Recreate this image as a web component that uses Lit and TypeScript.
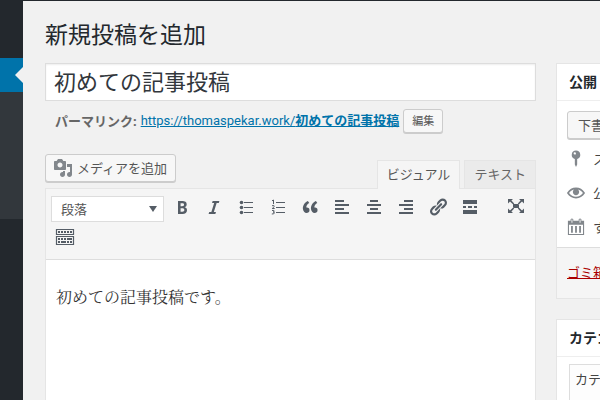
import { LitElement, html, css, svg } from "lit";
import { customElement } from "lit/decorators.js";

const shapes = {
  bold: svg`<path d="M6 4v13h4.54c1.37 0 2.46-.33 3.26-1 .8-.66 1.2-1.58 1.2-2.77 0-.84-.17-1.51-.51-2.01s-.9-.85-1.67-1.03v-.09c.57-.1 1.02-.4 1.36-.9s.51-1.13.51-1.91c0-1.14-.39-1.98-1.17-2.5C12.75 4.26 11.5 4 9.78 4H6zm2.57 5.15V6.26h1.36c.73 0 1.27.11 1.61.32.34.22.51.58.51 1.07 0 .54-.16.92-.47 1.15s-.82.35-1.51.35h-1.5zm0 2.19h1.6c1.44 0 2.16.53 2.16 1.61 0 .6-.17 1.05-.51 1.34s-.86.43-1.57.43H8.57v-3.38z"/>`,
  italic: svg`<path d="M14.78 6h-2.13l-2.8 9h2.12l-.62 2H4.6l.62-2h2.14l2.8-9H8.03l.62-2h6.75z"/>`,
  bullets: svg`<circle cx="5.5" cy="5.5" r="1.8"/><circle cx="5.5" cy="10.5" r="1.8"/><circle cx="5.5" cy="15.5" r="1.8"/><path d="M8 5h9v1H8zM8 10h9v1H8zM8 15h9v1H8z"/>`,
  numbers: svg`<path d="M8 5h9v1H8zM8 10h9v1H8zM8 15h9v1H8z"/><path d="M4 3.800 5.500 3v4M4 8.800q2.400-1 2.200.4Q6 10.400 4.200 11.500H6.700M4 13.500q2.500-.5 2.300.6-.2.900-1.300.9 1.500 0 1.500 1t-2.700 1" fill="none" stroke="currentColor"/>`,
  quote: svg`<path d="M9.490 13.220c0-.74-.2-1.380-.61-1.900-.62-.78-1.830-.88-2.530-.72-.29-1.650 1.110-3.750 2.920-4.650L7.880 4c-2.730 1.300-5.420 4.280-4.960 8.050C3.210 14.430 4.590 16 6.540 16c.85 0 1.560-.25 2.120-.75s.83-1.180.83-2.030zm8.050 0c0-.74-.2-1.380-.61-1.900-.63-.78-1.830-.88-2.530-.72-.29-1.650 1.110-3.750 2.920-4.650L15.930 4c-2.730 1.300-5.410 4.280-4.950 8.050.29 2.380 1.660 3.950 3.610 3.950.85 0 1.560-.25 2.120-.75s.83-1.180.83-2.030z"/>`,
  left: svg`<path d="M3 3h9v2H3zM3 7h14v2H3zM3 11h9v2H3zM3 15h14v2H3z"/>`,
  center: svg`<path d="M6 3h8v2H6zM3 7h14v2H3zM6 11h8v2H6zM3 15h14v2H3z"/>`,
  right: svg`<path d="M8 3h9v2H8zM3 7h14v2H3zM8 11h9v2H8zM3 15h14v2H3z"/>`,
  link: svg`<path d="M17.740 2.760c1.680 1.690 1.680 4.410 0 6.100l-1.530 1.520c-1.120 1.120-2.700 1.470-4.140 1.090l2.620-2.610.76-.77.76-.76c.84-.84.84-2.200 0-3.040-.84-.85-2.200-.85-3.040 0l-.77.76-3.380 3.380c-.37-1.440-.02-3.020 1.100-4.140l1.520-1.530c1.690-1.680 4.420-1.680 6.100 0zM8.590 13.430l5.340-5.340c.42-.42.42-1.100 0-1.520-.44-.43-1.130-.39-1.530 0l-5.330 5.340c-.42.42-.42 1.100 0 1.520.44.43 1.130.39 1.520 0zm-.76 2.290l4.140-4.150c.38 1.440.03 3.020-1.090 4.140l-1.520 1.530c-1.690 1.680-4.410 1.680-6.100 0-1.680-1.680-1.680-4.420 0-6.100l1.530-1.520c1.120-1.120 2.700-1.470 4.140-1.100l-4.140 4.150c-.85.84-.85 2.200 0 3.050.84.84 2.200.84 3.040 0z"/>`,
  more: svg`<path d="M17 7V3H3v4h14zM6 11V9H3v2h3zm6 0V9H8v2h4zm5 0V9h-3v2h3zm0 6v-4H3v4h14z"/>`,
  expand: svg`<path d="M7 8h6v4H7zM2 3h5L5.400 4.600 8.200 7.400 7.200 8.400 4 5.600 2 7.500zM18 3h-5l1.600 1.600-2.800 2.800 1 1L16 5.600l2 1.900zM2 17h5l-1.600-1.600 2.800-2.800-1-1L4 14.400l-2-1.900zM18 17h-5l1.600-1.600-2.800-2.800 1-1 3.200 2.800 2-1.900z"/>`,
  keyboard: svg`<path d="M1.500 2.500h17v5h-17zM1.500 9.500h17v8h-17z" fill="none" stroke="currentColor" stroke-width="1.200"/><path d="M3 4h2v2H3zM6 4h2v2H6zM9 4h2v2H9zM12 4h2v2h-2zM15 4h2v2h-2zM3 11h2v2H3zM6 11h2v2H6zM9 11h2v2H9zM12 11h5v2h-5zM3 14h2v2H3zM6 14h5v2H6zM12 14h2v2h-2zM15 14h2v2h-2z"/>`,
  media: svg`<path d="M13 11V4c0-.55-.45-1-1-1h-1.670L9 1H5L3.670 3H2c-.55 0-1 .45-1 1v7c0 .55.45 1 1 1h10c.55 0 1-.45 1-1zM7 4.500c1.380 0 2.500 1.120 2.500 2.500S8.380 9.500 7 9.500 4.500 8.380 4.500 7 5.620 4.500 7 4.500zM14 6h5v10.500c0 1.380-1.120 2.500-2.500 2.500S14 17.880 14 16.500s1.120-2.500 2.500-2.500c.17 0 .34.02.5.05V9h-3V6zm-4 8.050V13h2v3.500c0 1.380-1.120 2.500-2.500 2.500S7 17.880 7 16.500 8.120 14 9.500 14c.17 0 .34.02.5.05z"/>`,
  pin: svg`<path fill-rule="evenodd" d="M10 .500a4.800 4.800 0 0 1 1.300 9.400V16L10 19 8.700 16V9.900A4.800 4.800 0 0 1 10 .500zM8.600 2.500a1.300 1.300 0 1 0 .1 2.600 1.300 1.300 0 0 0-.1-2.600z"/>`,
  eye: svg`<path d="M19.700 9.400C17.700 6 14 3.900 10 3.900S2.300 6 .3 9.400L0 10l.3.6c2 3.400 5.700 5.500 9.700 5.500s7.700-2.100 9.700-5.500l.3-.6-.3-.6zM10 14.100c-3.100 0-6-1.600-7.700-4.100C3.600 8 5.700 6.600 8 6.100c-.9.6-1.500 1.700-1.500 2.900 0 1.900 1.600 3.500 3.500 3.500s3.500-1.600 3.500-3.500c0-1.200-.6-2.300-1.500-2.900 2.300.5 4.400 1.900 5.700 3.900-1.700 2.500-4.600 4.100-7.700 4.100z"/>`,
  calendar: svg`<path fill-rule="evenodd" d="M1 3h3V1.500q1.500-2 3 0V3h6V1.500q1.500-2 3 0V3h3v16H1zM2.200 7.500v10.300h15.600V7.500zM5 1.700v3.500h1V1.700zM14 1.700v3.500h1V1.700z"/><path d="M4.500 9h2v7.500h-2zM9 9h2v7.500H9zM13.500 9h2v7.500h-2z"/>`,
};
type Shape = keyof typeof shapes;

const icon = (name: Shape) =>
  html`<svg class="icon" viewBox="0 0 20 20" aria-hidden="true">${shapes[name]}</svg>`;

const tools: [Shape, string][] = [
  ["bold", "太字"], ["italic", "イタリック"], ["bullets", "番号なしリスト"],
  ["numbers", "番号付きリスト"], ["quote", "引用"], ["left", "左寄せ"],
  ["center", "中央揃え"], ["right", "右寄せ"], ["link", "リンクの挿入/編集"],
  ["more", "「続きを読む」タグを挿入"],
];

@customElement("app-root")
export class AppRoot extends LitElement {
  static styles = css`
    :host {
      display: block;
      font: 13px/20px "Noto Sans", "Noto Sans CJK JP", sans-serif;
      color: #444;
    }
    * { box-sizing: border-box; }
    button, input, select { font: inherit; color: inherit; margin: 0; }
    a { color: #0073aa; }
    .icon { display: block; width: 20px; height: 20px; fill: currentColor; flex: none; }
    .page {
      display: grid;
      grid-template-columns: 23px minmax(0, 1fr) 44px;
      height: 100vh;
      overflow: hidden;
      background: #f1f1f1;
      border-top: 1px solid #23282d;
    }
    .menu { background: #23282d; padding-top: 57px; }
    .current {
      height: 34px;
      background: #0073aa;
      display: flex;
      align-items: center;
      justify-content: flex-end;
    }
    .current::after {
      content: "";
      border: 8px solid transparent;
      border-right-color: #f1f1f1;
      border-left: 0;
    }
    .submenu { height: 127px; background: #32373c; }
    .main { padding: 17px 20px 0 22px; display: flex; flex-direction: column; }
    h1 {
      margin: 0 0 13px;
      font-size: 23px;
      font-weight: 400;
      line-height: 32px;
      color: #23282d;
    }
    .title {
      width: 100%;
      height: 38px;
      padding: 0 8px 4px;
      border: 1px solid #ddd;
      background: #fff;
      font-size: 22px;
      color: #32373c;
      box-shadow: inset 0 1px 2px rgba(0, 0, 0, 0.07);
    }
    .permalink {
      display: flex;
      align-items: center;
      gap: 4px;
      padding: 8px 10px 0;
      white-space: nowrap;
      color: #666;
    }
    .permalink a { font-family: Roboto, "Noto Sans CJK JP", sans-serif; }
    .button {
      display: flex;
      align-items: center;
      border: 1px solid #ccc;
      border-radius: 3px;
      background: #f7f7f7;
      box-shadow: 0 1px 0 #ccc;
      color: #555;
      height: 28px;
      padding: 0 10px;
      white-space: nowrap;
    }
    .small { height: 24px; padding: 0 8px; font-size: 11px; }
    .bar { display: flex; justify-content: space-between; align-items: flex-end; padding-top: 21px; }
    .media { gap: 4px; padding: 0 8px 0 7px; margin-bottom: 6px; }
    .media .icon { color: #82878c; }
    .tabs { display: flex; gap: 4px; }
    .tab {
      height: 28px;
      padding: 0 9px 2px;
      border: 1px solid #e5e5e5;
      border-bottom: 0;
      background: #ebebeb;
      color: #666;
    }
    .active {
      background: #f5f5f5;
      color: #555;
      height: 29px;
      margin-bottom: -1px;
      position: relative;
    }
    .editor {
      flex: 1;
      border: 1px solid #e5e5e5;
      border-bottom: 0;
      background: #fff;
    }
    .toolbar {
      padding: 7px 5px 12px;
      height: 71px;
      background: #f5f5f5;
      border-bottom: 1px solid #ddd;
      color: #555d66;
    }
    .row { display: flex; align-items: flex-start; }
    .format {
      appearance: none;
      width: 113px;
      height: 26px;
      margin-right: 2px;
      padding: 0 9px;
      border: 1px solid #ddd;
      border-radius: 0;
      background: #fff;
    }
    .picker { display: grid; align-items: center; color: #555; }
    .picker > * { grid-area: 1 / 1; }
    .picker::after {
      content: "";
      grid-area: 1 / 1;
      justify-self: end;
      margin-right: 9px;
      border: 4px solid transparent;
      border-top: 6px solid #555d66;
      border-bottom: 0;
      pointer-events: none;
    }
    .tool {
      width: 32px;
      height: 22px;
      padding: 0 6px;
      border: 0;
      background: none;
    }
    .wide { margin-left: auto; width: 28px; padding: 0 4px; height: 20px; }
    .second { width: 28px; padding: 0 4px; margin-top: 4px; }
    .content {
      margin: 0;
      padding: 23px 10px;
      font: 16px/28px "Noto Serif CJK JP", "Noto Sans CJK JP", serif;
      color: #333;
    }
    .side {
      padding-top: 62px;
      display: flex;
      flex-direction: column;
      gap: 20px;
      min-width: 0;
      overflow: hidden;
    }
    .panel { width: 280px; flex: none; border: 1px solid #e5e5e5; background: #fff; }
    h2 {
      margin: 0;
      padding: 8px 12px;
      border-bottom: 1px solid #eee;
      font-size: 14px;
      line-height: 20px;
      color: #23282d;
    }
    .publish { padding: 10px 10px 3px; }
    .publish .icon { color: #82878c; width: 18px; height: 18px; }
    .status { display: flex; align-items: center; gap: 8px; height: 34px; }
    .status:nth-of-type(1) { margin-top: 3px; }
    .footer { padding: 14px 10px 16px; border-top: 1px solid #ddd; background: #f5f5f5; }
    .trash { color: #a00; }
    .categories { padding: 7px 12px; }
    .list { border: 1px solid #ddd; background: #fdfdfd; padding: 4px 5px; height: 200px; }
  `;

  render() {
    return html`
      <div class="page">
        <nav class="menu" aria-label="メニュー">
          <div class="current"></div>
          <div class="submenu"></div>
        </nav>
        <main class="main">
          <h1>新規投稿を追加</h1>
          <input class="title" aria-label="タイトル" value="初めての記事投稿" />
          <div class="permalink">
            <strong>パーマリンク:</strong>
            <a href="https://thomaspekar.work/">https://thomaspekar.work/<strong>初めての記事投稿</strong></a>
            <button class="button small">編集</button>
          </div>
          <div class="bar">
            <button class="button media">${icon("media")}メディアを追加</button>
            <div class="tabs">
              <button class="tab active">ビジュアル</button>
              <button class="tab">テキスト</button>
            </div>
          </div>
          <section class="editor">
            <div class="toolbar">
              <div class="row">
                <div class="picker">
                  <select class="format" aria-label="書式"><option>段落</option></select>
                </div>
                ${tools.map(([name, label]) => html`<button class="tool" aria-label=${label}>${icon(name)}</button>`)}
                <button class="tool wide" aria-label="集中執筆モード">${icon("expand")}</button>
              </div>
              <div class="row">
                <button class="tool second" aria-label="ツールバー切り替え">${icon("keyboard")}</button>
              </div>
            </div>
            <p class="content">初めての記事投稿です。</p>
          </section>
        </main>
        <aside class="side">
          <section class="panel">
            <h2>公開</h2>
            <div class="publish">
              <button class="button">下書き</button>
              <div class="status">${icon("pin")}<span>ス</span></div>
              <div class="status">${icon("eye")}<span>公</span></div>
              <div class="status">${icon("calendar")}<span>す</span></div>
            </div>
            <div class="footer"><a class="trash" href="#trash">ゴミ箱</a></div>
          </section>
          <section class="panel">
            <h2>カテゴ</h2>
            <div class="categories"><div class="list">カテゴ</div></div>
          </section>
        </aside>
      </div>
    `;
  }
}
